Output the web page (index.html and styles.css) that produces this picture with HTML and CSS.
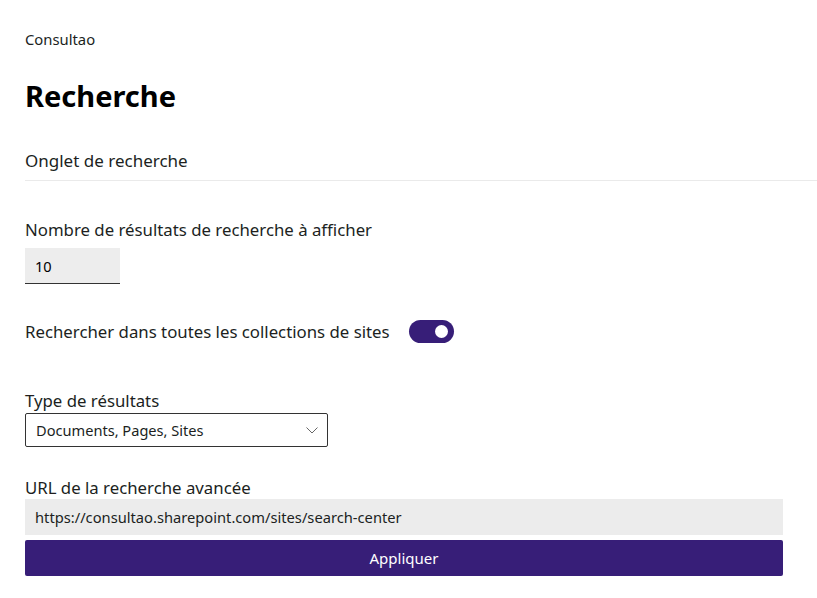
FILE: index.html
```html
<!DOCTYPE html>
<html lang="fr">
<head>
    <meta charset="UTF-8">
    <title>Recherche</title>
    <link rel="stylesheet" href="styles.css">
</head>
<body>
    <div class="panel">
        <div class="site">Consultao</div>
        <h1>Recherche</h1>
        <div class="tab-title">Onglet de recherche</div>

        <div class="field first">
            <label for="count">Nombre de résultats de recherche à afficher</label>
            <input id="count" class="num" type="text" value="10">
        </div>

        <div class="toggle-row">
            <span>Rechercher dans toutes les collections de sites</span>
            <span class="toggle"><span class="knob"></span></span>
        </div>

        <div class="field types">
            <label>Type de résultats</label>
            <div class="dropdown">
                <span>Documents, Pages, Sites</span>
                <svg width="12" height="7" viewBox="0 0 12 7"><path d="M0.5 0.5 L6 6 L11.5 0.5" fill="none" stroke="#666" stroke-width="1"/></svg>
            </div>
        </div>

        <div class="field url">
            <label for="url">URL de la recherche avancée</label>
            <input id="url" class="url-box" type="text" value="https://consultao.sharepoint.com/sites/search-center">
        </div>

        <button class="apply">Appliquer</button>
    </div>
</body>
</html>
```

FILE: styles.css
```css
body {
    margin: 0;
    padding: 0;
    font-family: "Noto Sans", "Open Sans", sans-serif;
    color: #201f1e;
    background: #fff;
}

.panel {
    padding: 29px 0 0 25px;
}

.site {
    font-size: 14.8px;
    line-height: 20px;
}

h1 {
    margin: 27px 0 0;
    font-size: 29px;
    line-height: 40px;
    font-weight: bold;
    color: #000;
}

.tab-title {
    margin-top: 33px;
    font-size: 17px;
    line-height: 24px;
    padding-bottom: 7px;
    border-bottom: 1px solid #eaeaea;
}

.field label {
    display: block;
    font-size: 16.8px;
    line-height: 22px;
}

.field.first {
    margin-top: 38px;
}

.num {
    display: block;
    margin-top: 7px;
    width: 95px;
    height: 36px;
    box-sizing: border-box;
    padding: 0 10px;
    border: none;
    border-bottom: 1px solid #333;
    background: #ededed;
    font: 14.6px "Noto Sans", sans-serif;
    color: #000;
}

.toggle-row {
    margin-top: 36px;
    display: flex;
    align-items: center;
    gap: 19px;
    font-size: 16.8px;
    line-height: 22px;
}

.toggle {
    position: relative;
    width: 45px;
    height: 23px;
    border-radius: 12px;
    background: #371e78;
}

.knob {
    position: absolute;
    right: 6px;
    top: 5px;
    width: 13px;
    height: 13px;
    border-radius: 50%;
    background: #fff;
}

.types {
    margin-top: 47px;
}

.dropdown {
    margin-top: 1px;
    width: 303px;
    height: 34px;
    box-sizing: border-box;
    border: 1px solid #333;
    border-radius: 2px;
    padding: 0 9px 0 10px;
    display: flex;
    align-items: center;
    justify-content: space-between;
    font-size: 14.6px;
}

.url {
    margin-top: 30px;
}

.url-box {
    display: block;
    width: 758px;
    height: 36px;
    box-sizing: border-box;
    padding: 0 10px;
    border: none;
    background: #ececec;
    font: 14.7px "Noto Sans", sans-serif;
    color: #201f1e;
}

.apply {
    display: block;
    margin-top: 5px;
    width: 758px;
    height: 36px;
    border: none;
    border-radius: 2px;
    background: #371e78;
    color: #fff;
    font: 15px "Noto Sans", sans-serif;
}
```
